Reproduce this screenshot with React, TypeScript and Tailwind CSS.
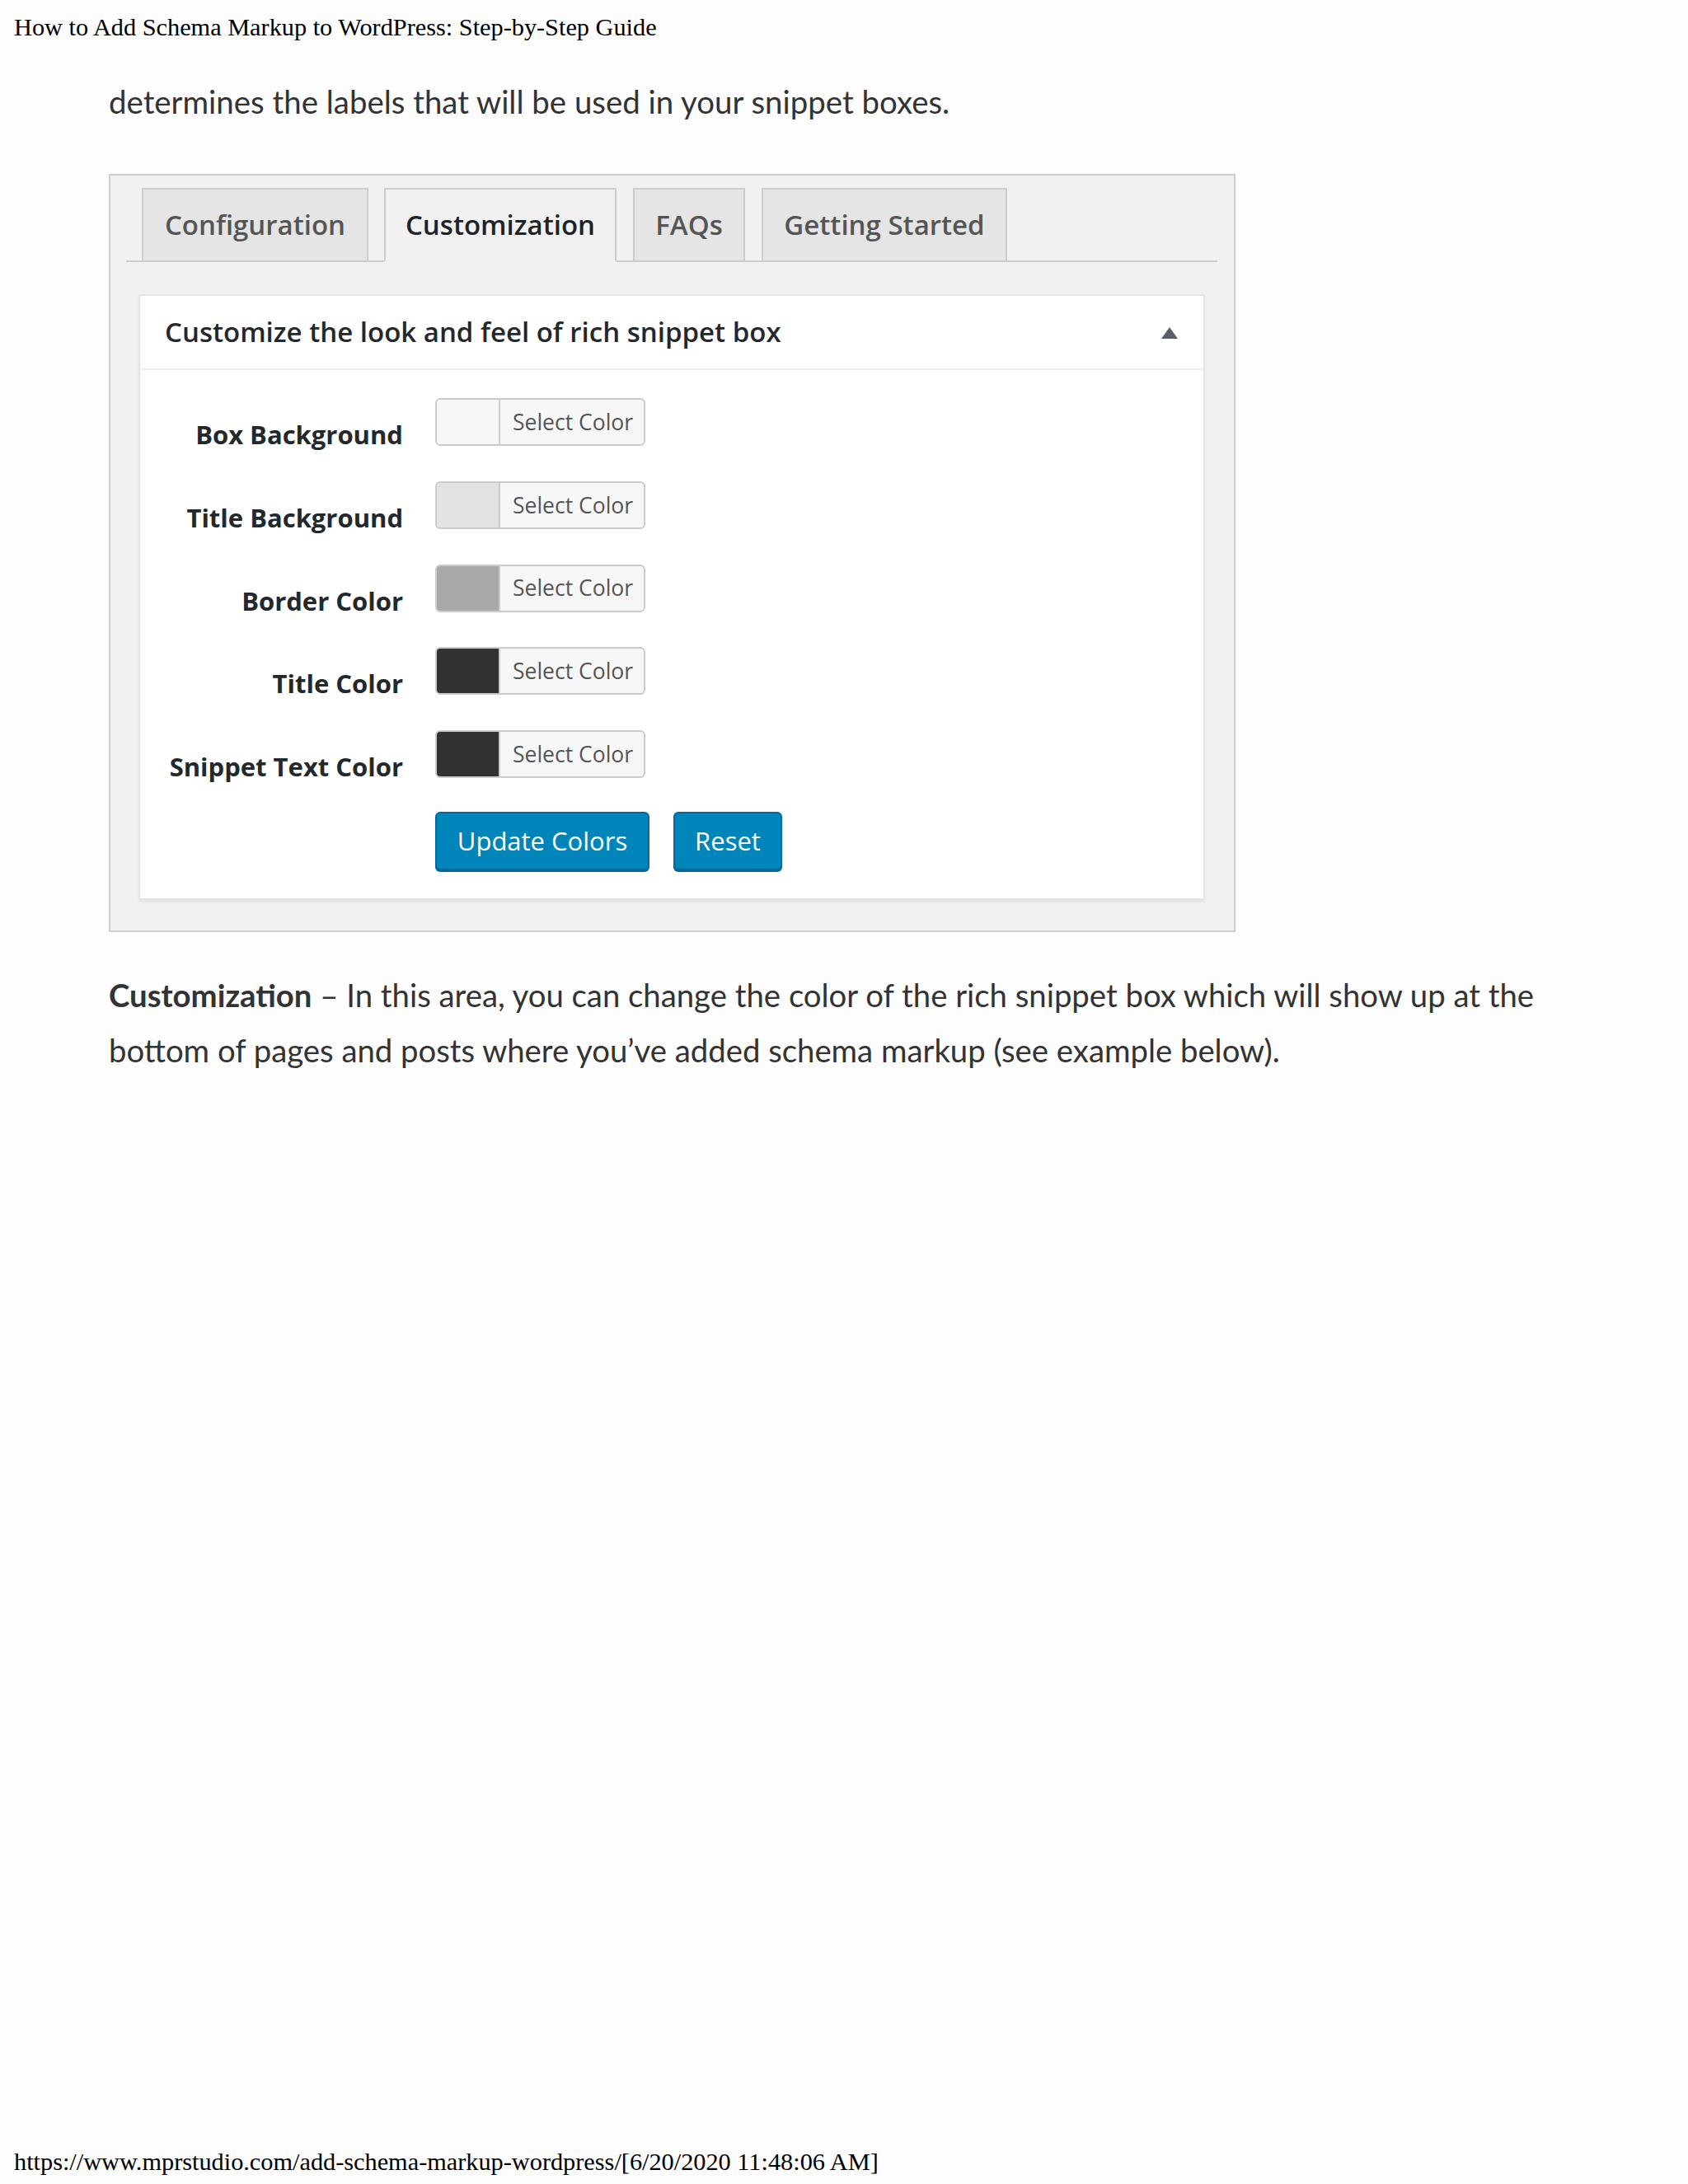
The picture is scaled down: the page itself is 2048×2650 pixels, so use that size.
import React from "react";

const swatches = [
  { label: "Box Background", color: "#f7f7f7" },
  { label: "Title Background", color: "#e2e2e4" },
  { label: "Border Color", color: "#a8a8aa" },
  { label: "Title Color", color: "#333134" },
  { label: "Snippet Text Color", color: "#333134" },
];

function ColorButton({ color }: { color: string }) {
  return (
    <div className="flex h-[58px] w-[255px] overflow-hidden rounded-[6px] border-2 border-[#cccccc] bg-[#f7f7f7]">
      <div className="w-[77px] border-r-2 border-[#cccccc]" style={{ backgroundColor: color }} />
      <div className="flex flex-1 items-center pl-[15px] text-[26.5px] leading-none text-[#555555]">Select Color</div>
    </div>
  );
}

export default function App() {
  return (
    <div className="flex min-h-[2650px] flex-col bg-[#fdfdfd]">
      <div className="pl-[17px] pt-[16px] text-[30.3px] leading-[34px] text-black [font-family:'Liberation_Serif',serif]">
        How to Add Schema Markup to WordPress: Step-by-Step Guide
      </div>

      <div className="pl-[132px]">
        <p className="mt-[40px] text-[38.4px] leading-[67px] text-[#333333] [font-family:Lato,sans-serif]">
          determines the labels that will be used in your snippet boxes.
        </p>

        <div className="mt-[54px] w-[1367px] border-2 border-[#cdcdcd] bg-[#f1f1f1] pb-[37px] pl-[19px] pr-[20px] pt-[15px] [font-family:'Open_Sans',sans-serif]">
          {/* tabs */}
          <div className="flex items-end border-b-2 border-[#cccccc]">
            <div className="-mb-[2px] ml-[19px] flex h-[90px] w-[275px] items-center justify-center border-2 border-[#cccccc] bg-[#e5e5e5] text-[33px] font-semibold text-[#555555]">
              Configuration
            </div>
            <div className="-mb-[2px] ml-[19px] flex h-[90px] w-[282px] items-center justify-center border-2 border-[#cccccc] border-b-[#f1f1f1] bg-[#f1f1f1] text-[33px] font-semibold text-[#1d2327]">
              Customization
            </div>
            <div className="-mb-[2px] ml-[20px] flex h-[90px] w-[136px] items-center justify-center border-2 border-[#cccccc] bg-[#e5e5e5] text-[33px] font-semibold text-[#555555]">
              FAQs
            </div>
            <div className="-mb-[2px] ml-[20px] flex h-[90px] w-[298px] items-center justify-center border-2 border-[#cccccc] bg-[#e5e5e5] text-[33px] font-semibold text-[#555555]">
              Getting Started
            </div>
          </div>

          {/* postbox */}
          <div className="ml-[15px] mr-[15px] mt-[39px] border-2 border-[#e5e5e5] bg-white shadow-[0_3px_3px_rgba(0,0,0,0.05)]">
            <div className="flex h-[90px] items-center justify-between border-b-2 border-[#eeeeee] pl-[30px] pr-[31px]">
              <span className="text-[33px] font-semibold text-[#23282d]">Customize the look and feel of rich snippet box</span>
              <svg width="20" height="14" viewBox="0 0 20 14" className="mt-[2px]">
                <polygon points="10,0 20,14 0,14" fill="#5b6066" />
              </svg>
            </div>

            <div className="flex flex-col gap-[42.75px] pb-[34px] pt-[34px]">
              {swatches.map((s) => (
                <div key={s.label} className="flex h-[58px] items-start">
                  <div className="w-[319px] whitespace-nowrap pt-[24px] text-right text-[31px] font-bold leading-[40px] text-[#23282d]">
                    {s.label}
                  </div>
                  <div className="ml-[39px]">
                    <ColorButton color={s.color} />
                  </div>
                </div>
              ))}
              <div className="-mt-[2px] flex">
                <div className="ml-[358px] flex h-[71px] w-[260px] items-center justify-center rounded-[6px] border-2 border-[#006a9e] bg-[#0085ba] text-[31px] text-white shadow-[0_2px_0_#006799]">
                  Update Colors
                </div>
                <div className="ml-[29px] flex h-[71px] w-[132px] items-center justify-center rounded-[6px] border-2 border-[#006a9e] bg-[#0085ba] text-[31px] text-white shadow-[0_2px_0_#006799]">
                  Reset
                </div>
              </div>
            </div>
          </div>
        </div>

        <p className="mt-[43px] whitespace-nowrap text-[38.3px] leading-[67px] text-[#333333] [font-family:Lato,sans-serif]">
          <strong className="font-bold">Customization</strong> – In this area, you can change the color of the rich snippet box which will show up at the
          <br />
          bottom of pages and posts where you’ve added schema markup (see example below).
        </p>
      </div>

      <div className="mt-auto pb-[10px] pl-[17px] text-[30.3px] leading-[34px] text-black [font-family:'Liberation_Serif',serif]">
        https://www.mprstudio.com/add-schema-markup-wordpress/[6/20/2020 11:48:06 AM]
      </div>
    </div>
  );
}
